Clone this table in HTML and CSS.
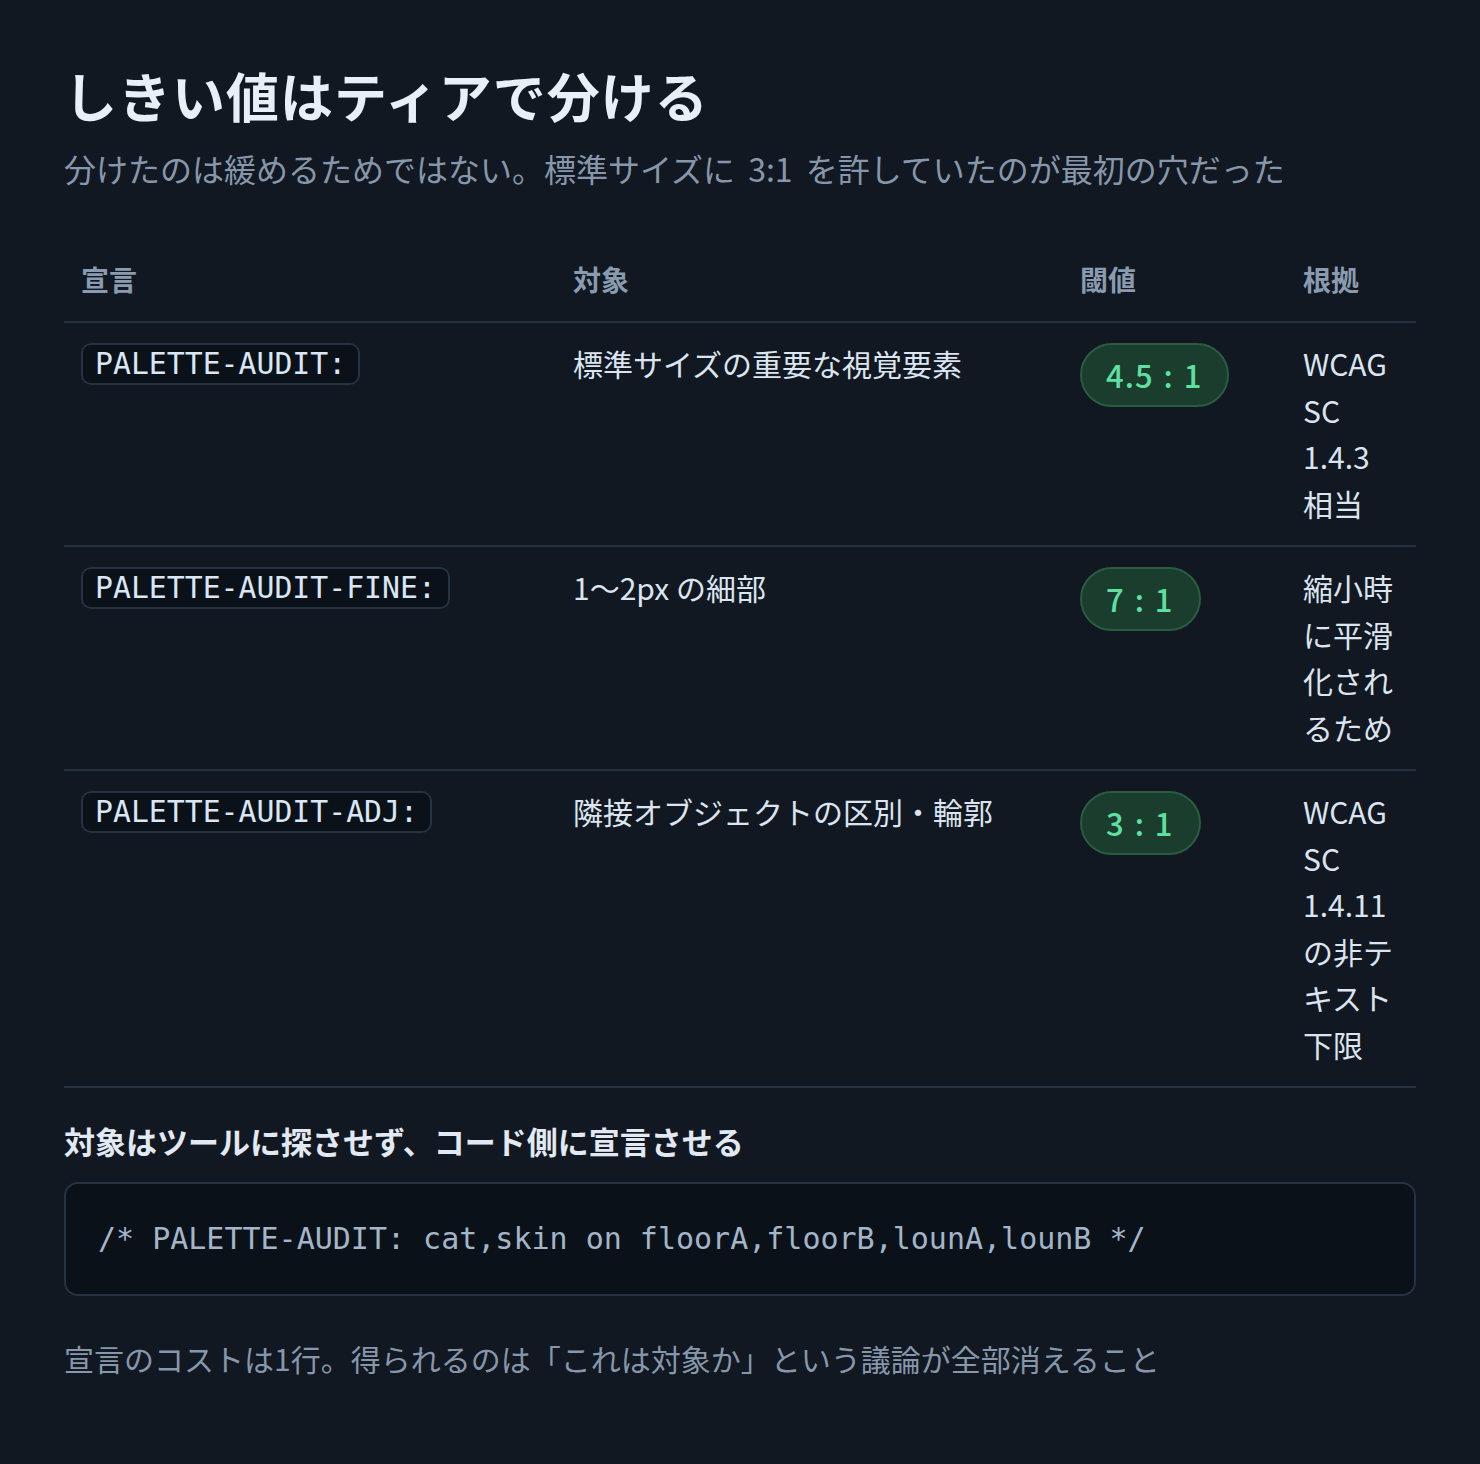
FILE: index.html
```html
<!DOCTYPE html>
<html lang="ja">
<head>
    <meta charset="UTF-8">
    <meta name="viewport" content="width=device-width, initial-scale=1.0">
    <title>しきい値はティアで分ける</title>
    <link rel="stylesheet" href="styles.css">
</head>
<body>
    <div class="page">
        <h1 class="title">しきい値はティアで分ける</h1>
        <p class="lead">分けたのは緩めるためではない。標準サイズに 3:1 を許していたのが最初の穴だった</p>

        <table class="tiers">
            <colgroup>
                <col class="col-decl">
                <col class="col-target">
                <col class="col-ratio">
                <col class="col-basis">
            </colgroup>
            <thead>
                <tr>
                    <th>宣言</th>
                    <th>対象</th>
                    <th>閾値</th>
                    <th>根拠</th>
                </tr>
            </thead>
            <tbody>
                <tr>
                    <td><code class="tag">PALETTE-AUDIT:</code></td>
                    <td>標準サイズの重要な視覚要素</td>
                    <td><span class="ratio">4.5 : 1</span></td>
                    <td>WCAG SC 1.4.3 相当</td>
                </tr>
                <tr>
                    <td><code class="tag">PALETTE-AUDIT-FINE:</code></td>
                    <td>1〜2px の細部</td>
                    <td><span class="ratio">7 : 1</span></td>
                    <td>縮小時に平滑化されるため</td>
                </tr>
                <tr>
                    <td><code class="tag">PALETTE-AUDIT-ADJ:</code></td>
                    <td>隣接オブジェクトの区別・輪郭</td>
                    <td><span class="ratio">3 : 1</span></td>
                    <td>WCAG SC 1.4.11 の非テキスト下限</td>
                </tr>
            </tbody>
        </table>

        <h2 class="subhead">対象はツールに探させず、コード側に宣言させる</h2>
        <pre class="code">/* PALETTE-AUDIT: cat,skin on floorA,floorB,lounA,lounB */</pre>
        <p class="note">宣言のコストは1行。得られるのは「これは対象か」という議論が全部消えること</p>
    </div>
</body>
</html>
```

FILE: styles.css
```css
:root {
    --bg: #111821;
    --bg-deep: #0b1118;
    --line: #243241;
    --text: #dbe4ef;
    --muted: #8797ab;
    --head: #8a9bb0;
    --green: #5fe0a0;
    --mono: "DejaVu Sans Mono", "Liberation Mono", monospace;
}

* {
    margin: 0;
    padding: 0;
    box-sizing: border-box;
}

body {
    background-color: var(--bg);
    color: var(--text);
    font-family: "Noto Sans CJK JP", "Noto Sans", sans-serif;
}

.page {
    width: 1480px;
    padding: 64px 64px 80px;
}

.title {
    font-size: 53px;
    font-weight: 700;
    line-height: 62px;
    letter-spacing: 1px;
    color: #e8eff8;
}

.lead {
    margin-top: 18px;
    font-size: 32px;
    line-height: 48px;
    word-spacing: 6px;
    color: var(--muted);
}

/* 表 */
.tiers {
    width: 100%;
    margin-top: 44px;
    border-collapse: collapse;
    table-layout: fixed;
}

.col-decl { width: 492px; }
.col-target { width: 507px; }
.col-ratio { width: 223px; }
.col-basis { width: 130px; }

.tiers th {
    text-align: left;
    font-size: 28px;
    font-weight: 700;
    line-height: 46px;
    color: var(--head);
    padding: 20px 17px 19px;
    border-bottom: 2px solid var(--line);
}

.tiers td {
    vertical-align: top;
    font-size: 30px;
    line-height: 46.5px;
    padding: 17px 17px 19px;
    border-bottom: 2px solid var(--line);
}

.tag {
    display: inline-block;
    font-family: var(--mono);
    font-size: 29.8px;
    line-height: 38px;
    color: #d9e6f5;
    background: var(--bg-deep);
    border: 2px solid var(--line);
    border-radius: 10px;
    padding: 0 12px;
    vertical-align: top;
    margin-top: 3px;
}

.ratio {
    display: inline-block;
    font-size: 31px;
    font-weight: 500;
    line-height: 60px;
    letter-spacing: 1px;
    word-spacing: 2px;
    color: var(--green);
    background: #1a3d2d;
    border: 2px solid #2a5c42;
    border-radius: 32px;
    padding: 0 25px 0 24px;
    margin-top: 3px;
    vertical-align: top;
}

.subhead {
    margin-top: 30px;
    font-size: 31px;
    font-weight: 700;
    line-height: 46px;
    color: #e2e9f2;
}

.code {
    margin-top: 18px;
    font-family: var(--mono);
    font-size: 30px;
    line-height: 40px;
    color: #a3b5c9;
    background: var(--bg-deep);
    border: 2px solid var(--line);
    border-radius: 14px;
    padding: 35px 32px;
}

.note {
    margin-top: 39px;
    font-size: 30px;
    line-height: 46px;
    color: var(--muted);
}
```
